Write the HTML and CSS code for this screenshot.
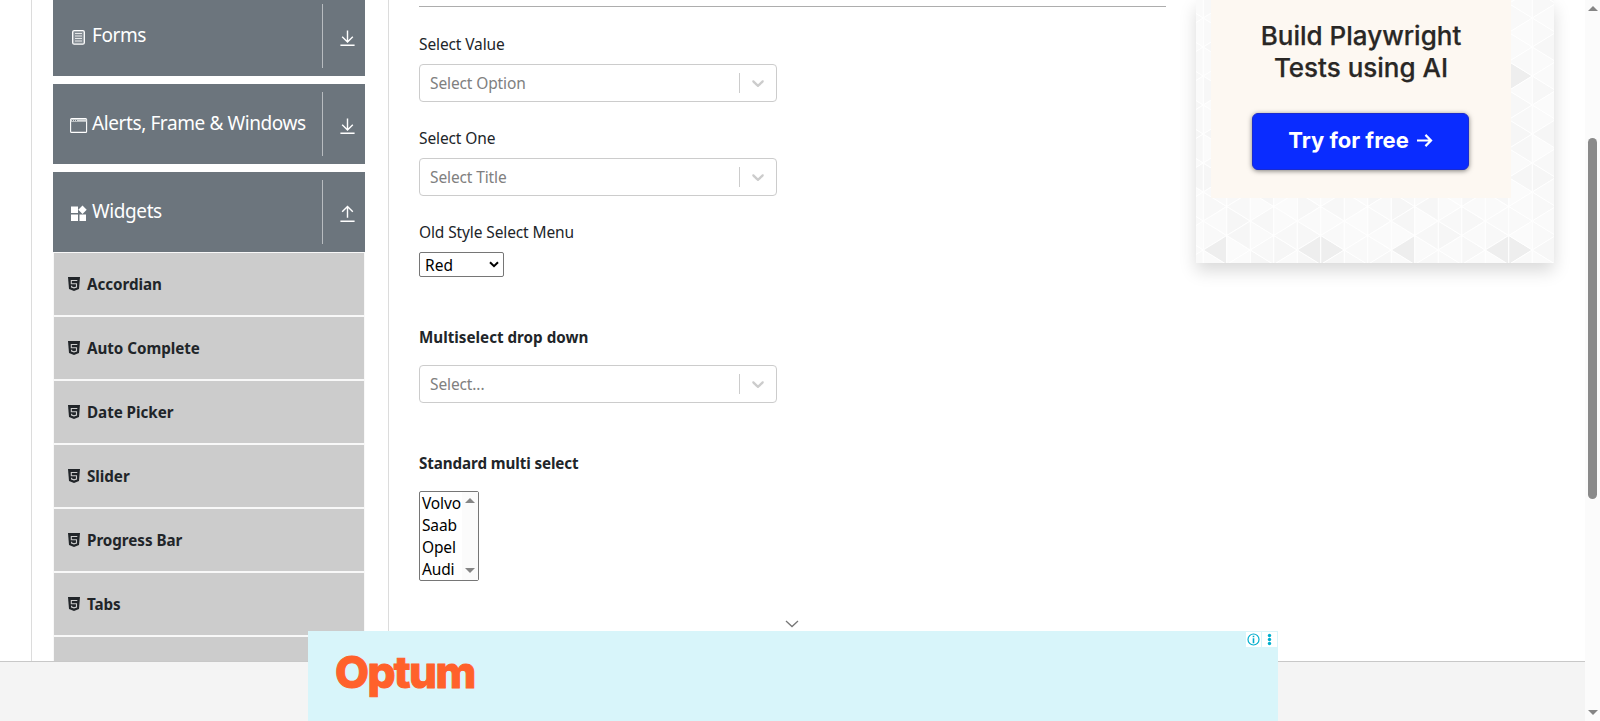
FILE: index.html
```html
<!DOCTYPE html>
<html lang="en">
<head>
<meta charset="utf-8">
<title>Select Menu</title>
<link rel="stylesheet" href="styles.css">
</head>
<body>
<svg class="defs" width="0" height="0" aria-hidden="true">
  <symbol id="down" viewBox="0 0 24 24"><path d="M12 2v16M4.500 11l7.500 7.500 7.500-7.500M2 23h20" fill="none" stroke="#fff" stroke-width="2"/></symbol>
  <symbol id="up" viewBox="0 0 24 24"><path d="M12 18V2M4.500 9.500L12 2l7.500 7.500M2 23h20" fill="none" stroke="#fff" stroke-width="2"/></symbol>
  <symbol id="html" viewBox="0 0 12 14"><path d="M0 0h12l-1 12-5 2-5-2z" fill="#212529"/><path d="M9.300 3.500H3.300v3.200h5.200v3.300L6 10.800l-2.400-.7V8.800" fill="none" stroke="#ccc" stroke-width="1.100"/></symbol>
  <symbol id="chev" viewBox="0 0 20 20"><path d="M4.516 7.548c0.436-0.446 1.043-0.481 1.576 0l3.908 3.747 3.908-3.747c0.533-0.481 1.141-0.446 1.574 0 0.436 0.445 0.408 1.197 0 1.615-0.406 0.418-4.695 4.502-4.695 4.502-0.217 0.223-0.502 0.335-0.787 0.335s-0.570-0.112-0.789-0.335c0 0-4.287-4.084-4.695-4.502s-0.436-1.170 0-1.615z" fill="#ccc"/></symbol>
</svg>
<div class="screen">
  <div class="page">
    <div class="content">
      <aside class="sidebar">
        <div class="head"><svg class="hicon" viewBox="0 0 18 18"><rect x="2.700" y="2.600" width="11.600" height="13.600" rx="1.500" fill="#868e95" stroke="#fff" stroke-width="1.300"/><path d="M5 5.500h7M5 8h7M5 10.500h7M5 13h7" stroke="#fff" stroke-width=".8"/></svg><span class="htext">Forms</span><span class="toggle"><svg><use href="#down"/></svg></span></div>
        <div class="head"><svg class="hicon" viewBox="0 0 18 18"><rect x=".6" y="2.600" width="16" height="13.800" rx="1" fill="none" stroke="#fff" stroke-width="1.100"/><path d="M.6 4.500h16" stroke="#d5d8da" stroke-width="2.500"/><path d="M2 4.500h5" stroke="#6c757d" stroke-dasharray="1 1"/></svg><span class="htext">Alerts, Frame &amp; Windows</span><span class="toggle"><svg><use href="#down"/></svg></span></div>
        <div class="head last"><svg class="hicon" viewBox="0 0 18 18"><path d="M1 2.500h7v6.500H1zM1 10.500h7v6.500H1zM9.500 10.500H16v6.500H9.500zM12.500 1.500l4.200 4.200-4.200 4.200-4.200-4.200z" fill="#fff"/></svg><span class="htext">Widgets</span><span class="toggle"><svg><use href="#up"/></svg></span></div>
        <ul class="menu">
          <li><svg><use href="#html"/></svg><span>Accordian</span></li>
          <li><svg><use href="#html"/></svg><span>Auto Complete</span></li>
          <li><svg><use href="#html"/></svg><span>Date Picker</span></li>
          <li><svg><use href="#html"/></svg><span>Slider</span></li>
          <li><svg><use href="#html"/></svg><span>Progress Bar</span></li>
          <li><svg><use href="#html"/></svg><span>Tabs</span></li>
          <li></li>
        </ul>
      </aside>
      <main class="main">
        <hr class="rule">
        <div class="label">Select Value</div>
        <div class="select"><span>Select Option</span><i></i><svg><use href="#chev"/></svg></div>
        <div class="label next">Select One</div>
        <div class="select"><span>Select Title</span><i></i><svg><use href="#chev"/></svg></div>
        <div class="label next">Old Style Select Menu</div>
        <div class="native"><span>Red</span><svg viewBox="0 0 10 7"><path d="M1 1.200l4 4 4-4" fill="none" stroke="#000" stroke-width="2"/></svg></div>
        <div class="label bold multi">Multiselect drop down</div>
        <div class="select"><span>Select...</span><i></i><svg><use href="#chev"/></svg></div>
        <div class="label bold standard">Standard multi select</div>
        <div class="listbox">
          <div class="opts"><div>Volvo</div><div>Saab</div><div>Opel</div><div>Audi</div></div>
          <div class="track"><b class="tri up"></b><b class="tri down"></b></div>
        </div>
      </main>
      <aside class="ad">
        <svg class="pattern" id="pattern" width="358" height="263"></svg>
        <div class="card">
          <div class="title"><span>Build Playwright</span><span>Tests using AI</span></div>
          <div class="cta"><span>Try for free</span><svg viewBox="0 0 18 16"><path d="M1 8h15M10 2l6 6-6 6" fill="none" stroke="#fff" stroke-width="2.300"/></svg></div>
        </div>
      </aside>
    </div>
    <footer class="footer"></footer>
  </div>
  <div class="scroll"><b class="tri up"></b><div class="thumb"></div><b class="tri down"></b></div>
</div>
<svg class="collapse" viewBox="0 0 14 8"><path d="M1 1l6 5.500L13 1" fill="none" stroke="#777" stroke-width="1.300"/></svg>
<div class="banner">
  <span class="brand">Optum</span>
  <div class="ctl">
    <svg viewBox="0 0 15 15"><circle cx="7.500" cy="7.500" r="5.500" fill="none" stroke="#00aecd" stroke-width="1.200"/><path d="M7.500 6.300v5M7.500 3.700v1.500" stroke="#00aecd" stroke-width="1.600"/></svg>
    <svg viewBox="0 0 15 15"><g fill="#00aecd"><circle cx="7.500" cy="3.500" r="1.700"/><circle cx="7.500" cy="7.500" r="1.700"/><circle cx="7.500" cy="11.500" r="1.700"/></g></svg>
  </div>
</div>
<script src="pattern.js"></script>
</body>
</html>
```
FILE: styles.css
```css
* { box-sizing: border-box; }
body { margin: 0; height: 721px; overflow: hidden; background: #fff; color: #212529; font-family: "Noto Sans", "Open Sans", sans-serif; font-size: 15.5px; }
.defs { position: absolute; }
.screen { display: flex; height: 721px; }
.page { flex: 1; display: flex; flex-direction: column; }
.content { height: 661px; margin-left: 31px; border-left: 1px solid #dcdcdc; display: flex; overflow: hidden; }
.footer { flex: 1; border-top: 1px solid #c8c8c8; background: #f4f4f4; }

.sidebar { width: 357px; padding: 0 23px 0 21px; border-right: 1px solid #dcdcdc; flex: none; }
.head { height: 80px; margin-bottom: 8px; padding: 8px 0 8px 17px; background: #6c757d; color: #fff; display: flex; }
.head:first-child { margin-top: -4px; }
.head.last { margin-bottom: 0; }
.hicon { width: 18px; height: 18px; margin-top: 24px; flex: none; }
.htext { flex: 1; padding-left: 4px; font-size: 19px; line-height: 63px; letter-spacing: -.4px; white-space: nowrap; }
.toggle { width: 43px; padding: 25px 0 0 16px; border-left: 1px solid #b8bcc0; flex: none; }
.toggle svg { width: 17px; height: 17px; display: block; }
.menu { list-style: none; margin: 0; padding: 1px 1px 0; background: #f8f8f8; }
.menu li { height: 62px; margin-bottom: 2px; padding-left: 14px; background: #ccc; display: flex; align-items: center; font-weight: 700; font-size: 15.200px; letter-spacing: -.04px; }
.menu svg { width: 12px; height: 14px; margin-right: 7px; }

.main { width: 777px; padding: 6px 0 0 30px; flex: none; }
.rule { width: 747px; height: 1px; margin: 0; border: 0; background: #adadad; }
.label { height: 24px; margin: 25px 0 8px; line-height: 24px; letter-spacing: -.12px; }
.label.next { margin-top: 24px; }
.label.bold { font-weight: 700; font-size: 15.200px; letter-spacing: 0; }
.label.multi { margin: 50px 0 16px; }
.label.standard { margin: 48px 0 16px; letter-spacing: -.1px; }
.select { width: 358px; height: 38px; padding: 0 8px 0 10px; border: 1px solid #ccc; border-radius: 4px; color: #808080; display: flex; align-items: center; letter-spacing: -.12px; }
.select span { flex: 1; }
.select i { width: 1px; height: 20px; background: #ccc; }
.select svg { width: 20px; height: 20px; margin-left: 8px; }
.native { width: 85px; height: 25px; padding: 0 4px 0 5px; border: 1px solid #767676; border-radius: 2px; color: #000; display: flex; align-items: center; justify-content: space-between; }
.native + .label.multi { margin-top: 48px; }
.native svg { width: 10px; height: 7px; }
.listbox { width: 60px; height: 90px; border: 1px solid #767676; border-radius: 2px; color: #000; display: flex; }
.opts { flex: 1; padding: 0 0 0 2px; letter-spacing: -.15px; }
.opts div { height: 22px; line-height: 23px; }
.track { width: 16px; padding: 6px 3px 7px; background: #fbfbfb; display: flex; flex-direction: column; justify-content: space-between; }
.tri { width: 0; height: 0; border: 5px solid transparent; }
.tri.up { border-top: 0; border-bottom: 5px solid #858585; }
.tri.down { border-bottom: 0; border-top: 5px solid #858585; }

.ad { position: relative; width: 358px; height: 263px; margin-left: 30px; padding-left: 15px; background: #f8f8f8; box-shadow: 0 8px 16px rgba(0,0,0,.15); flex: none; }
.pattern { position: absolute; left: 0; top: 0; }
.card { position: relative; width: 300px; height: 198px; padding-top: 20px; background: #fdf8f2; font-family: Inter, sans-serif; display: flex; flex-direction: column; align-items: center; }
.title { display: flex; flex-direction: column; align-items: center; color: #292725; font-size: 26px; font-weight: 500; line-height: 32px; white-space: nowrap; -webkit-text-stroke: .25px #292725; }
.cta { width: 217px; height: 57px; margin: 29px 0 0 -1px; padding-bottom: 3px; background: #0a2cff; border: 1px solid #1a2bd0; border-radius: 6px; box-shadow: 0 1px 5px rgba(0,0,0,.5); color: #fff; font-size: 22px; font-weight: 700; display: flex; align-items: center; justify-content: center; gap: 7px; }
.cta svg { width: 17px; height: 15px; }

.scroll { width: 15px; padding: 6px 2px 6px 3px; background: #fbfbfb; display: flex; flex-direction: column; }
.thumb { width: 9px; height: 361px; margin: 127px 0 auto; border-radius: 5px; background: #8a8a8a; }

.collapse { position: absolute; left: 785px; top: 620px; width: 14px; height: 8px; }
.banner { position: absolute; left: 308px; top: 631px; width: 970px; height: 90px; padding: 1px 1px 0 27px; background: #d8f5fa; display: flex; justify-content: space-between; }
.brand { margin-top: 10px; color: #ff612b; font-family: Inter, sans-serif; font-size: 44px; font-weight: 800; line-height: 60px; letter-spacing: -1.600px; -webkit-text-stroke: 1px #ff612b; }
.ctl { display: flex; gap: 1px; }
.ctl svg { width: 15px; height: 15px; background: #fff; }
```
FILE: pattern.js
```js
// Triangular mesh behind the advert card.
const svg = document.getElementById('pattern');
const W = 23.5, S = 29, X0 = 7.3, Y0 = 18;
const tones = ['#fafafa', '#f8f8f8', '#fbfbfb', '#f7f7f7', '#f9f9f9', '#f6f6f6', '#fafafa'];
let out = '';
for (let k = -1; k < 16; k++) {
  const x = X0 + k * W, odd = Math.abs(k) % 2;
  for (let r = -2; r < 10; r++) {
    const a = Y0 + r * S + (odd ? S / 2 : 0);
    const b = a + S / 2;
    const t = (k * 5 + r * 3 + k * r + 60) % 7;
    const m = ((k % 8) + 8) % 8;
    const right = (r === 7 && m === 5) || (k === 13 && r === 1);
    const left = r === 8 && (m === 4 || m === 0);
    out += `<path d="M${x} ${a}V${a + S}L${x + W} ${b}z" fill="${right ? '#eeeeee' : tones[t]}"/>`;
    out += `<path d="M${x + W} ${b - S}V${b}L${x} ${a}z" fill="${left ? '#eeeeee' : tones[(t + 3) % 7]}"/>`;
  }
}
svg.innerHTML = `<g stroke="#fff" stroke-width=".9">${out}</g>`;
```
